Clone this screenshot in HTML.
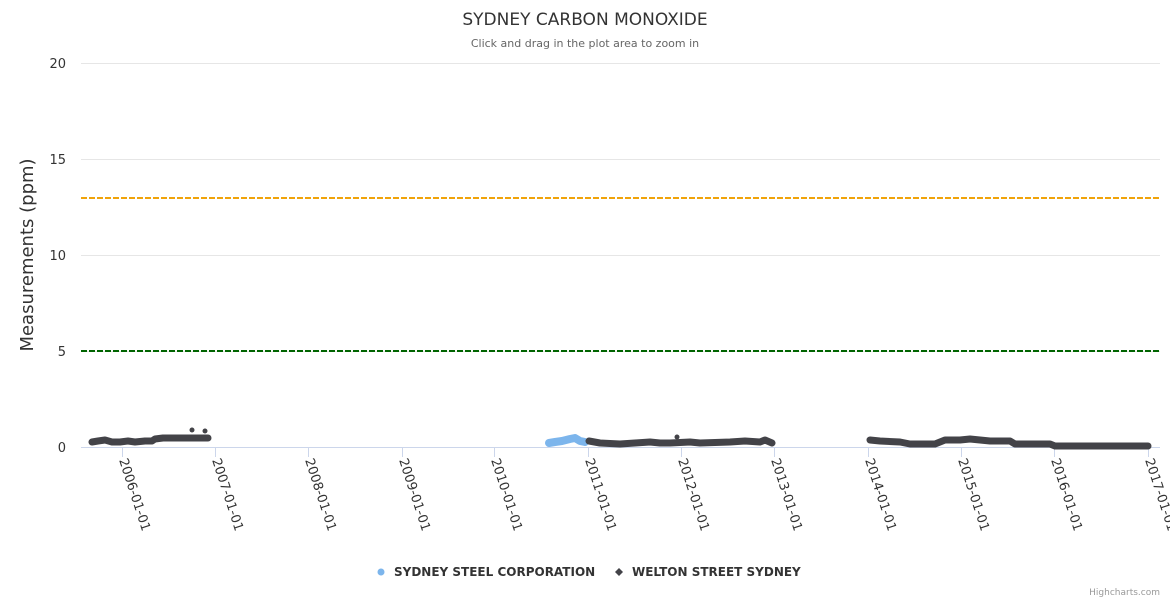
<!DOCTYPE html>
<html><head><meta charset="utf-8"><style>
html,body{margin:0;padding:0;background:#fff;width:1170px;height:600px;overflow:hidden}
text{font-family:"DejaVu Sans","Liberation Sans",sans-serif}
</style></head><body>
<svg width="1170" height="600" xmlns="http://www.w3.org/2000/svg">
<text x="585" y="25" text-anchor="middle" font-size="17" fill="#333">SYDNEY CARBON MONOXIDE</text>
<text x="585" y="47" text-anchor="middle" font-size="11" fill="#666">Click and drag in the plot area to zoom in</text>
<g stroke="#e6e6e6" stroke-width="1">
<line x1="81" x2="1160" y1="63.5" y2="63.5"/>
<line x1="81" x2="1160" y1="159.5" y2="159.5"/>
<line x1="81" x2="1160" y1="255.5" y2="255.5"/>
<line x1="81" x2="1160" y1="351.5" y2="351.5"/>
</g>
<line x1="81" x2="1160" y1="447.5" y2="447.5" stroke="#ccd6eb"/>
<g font-size="13" fill="#333" text-anchor="end">
<text x="66" y="68">20</text><text x="66" y="164">15</text><text x="66" y="260">10</text><text x="66" y="356">5</text><text x="66" y="452">0</text>
</g>
<text transform="translate(33,255) rotate(-90)" text-anchor="middle" font-size="18" fill="#333">Measurements (ppm)</text>
<line x1="81" x2="1160" y1="198" y2="198" stroke="#f0a30a" stroke-width="2" stroke-dasharray="6,2"/>
<line x1="81" x2="1160" y1="351" y2="351" stroke="#006400" stroke-width="2" stroke-dasharray="6,2"/>
<g stroke="#ccd6eb">
<line x1="122.5" x2="122.5" y1="447" y2="457"/><line x1="215.5" x2="215.5" y1="447" y2="457"/>
<line x1="308.5" x2="308.5" y1="447" y2="457"/><line x1="402.5" x2="402.5" y1="447" y2="457"/>
<line x1="494.5" x2="494.5" y1="447" y2="457"/><line x1="588.5" x2="588.5" y1="447" y2="457"/>
<line x1="681.5" x2="681.5" y1="447" y2="457"/><line x1="774.5" x2="774.5" y1="447" y2="457"/>
<line x1="868.5" x2="868.5" y1="447" y2="457"/><line x1="961.5" x2="961.5" y1="447" y2="457"/>
<line x1="1054.5" x2="1054.5" y1="447" y2="457"/><line x1="1148.5" x2="1148.5" y1="447" y2="457"/>
</g>
<g font-size="13" fill="#333">
<text transform="translate(119,460) rotate(72)">2006-01-01</text>
<text transform="translate(212,460) rotate(72)">2007-01-01</text>
<text transform="translate(305,460) rotate(72)">2008-01-01</text>
<text transform="translate(399,460) rotate(72)">2009-01-01</text>
<text transform="translate(491,460) rotate(72)">2010-01-01</text>
<text transform="translate(585,460) rotate(72)">2011-01-01</text>
<text transform="translate(678,460) rotate(72)">2012-01-01</text>
<text transform="translate(771,460) rotate(72)">2013-01-01</text>
<text transform="translate(865,460) rotate(72)">2014-01-01</text>
<text transform="translate(958,460) rotate(72)">2015-01-01</text>
<text transform="translate(1051,460) rotate(72)">2016-01-01</text>
<text transform="translate(1145,460) rotate(72)">2017-01-01</text>
</g>
<g stroke-linecap="round" stroke-linejoin="round" fill="none">
<path d="M549,443 L555,442 L562,441 L570,439 L575,438 L580,441 L585,442" stroke="#7cb5ec" stroke-width="8"/>
<g stroke="#434348" stroke-width="7">
<path d="M92,442 L98,441 L105,440 L112,442 L120,442 L128,441 L135,442 L145,441 L152,441 L155,439 L163,438 L208,438"/>
<path d="M589,441 L600,443 L620,444 L635,443 L650,442 L660,443 L670,443 L690,442 L700,443 L730,442 L745,441 L760,442 L765,440 L772,443"/>
<path d="M870,440 L880,441 L900,442 L910,444 L935,444 L945,440 L960,440 L970,439 L990,441 L1010,441 L1015,444 L1050,444 L1055,446 L1148,446"/>
</g>
</g>
<g fill="#434348"><circle cx="192" cy="430" r="2.5"/><circle cx="205" cy="431" r="2.5"/><circle cx="677" cy="437" r="2.5"/></g>
<circle cx="381" cy="572" r="3.5" fill="#7cb5ec"/>
<text x="394" y="576" font-size="12" font-weight="bold" fill="#333">SYDNEY STEEL CORPORATION</text>
<path d="M619,568 L623,572 L619,576 L615,572Z" fill="#434348"/>
<text x="632" y="576" font-size="12" font-weight="bold" fill="#333">WELTON STREET SYDNEY</text>
<text x="1160" y="595" text-anchor="end" font-size="9" fill="#999">Highcharts.com</text>
</svg>
</body></html>
